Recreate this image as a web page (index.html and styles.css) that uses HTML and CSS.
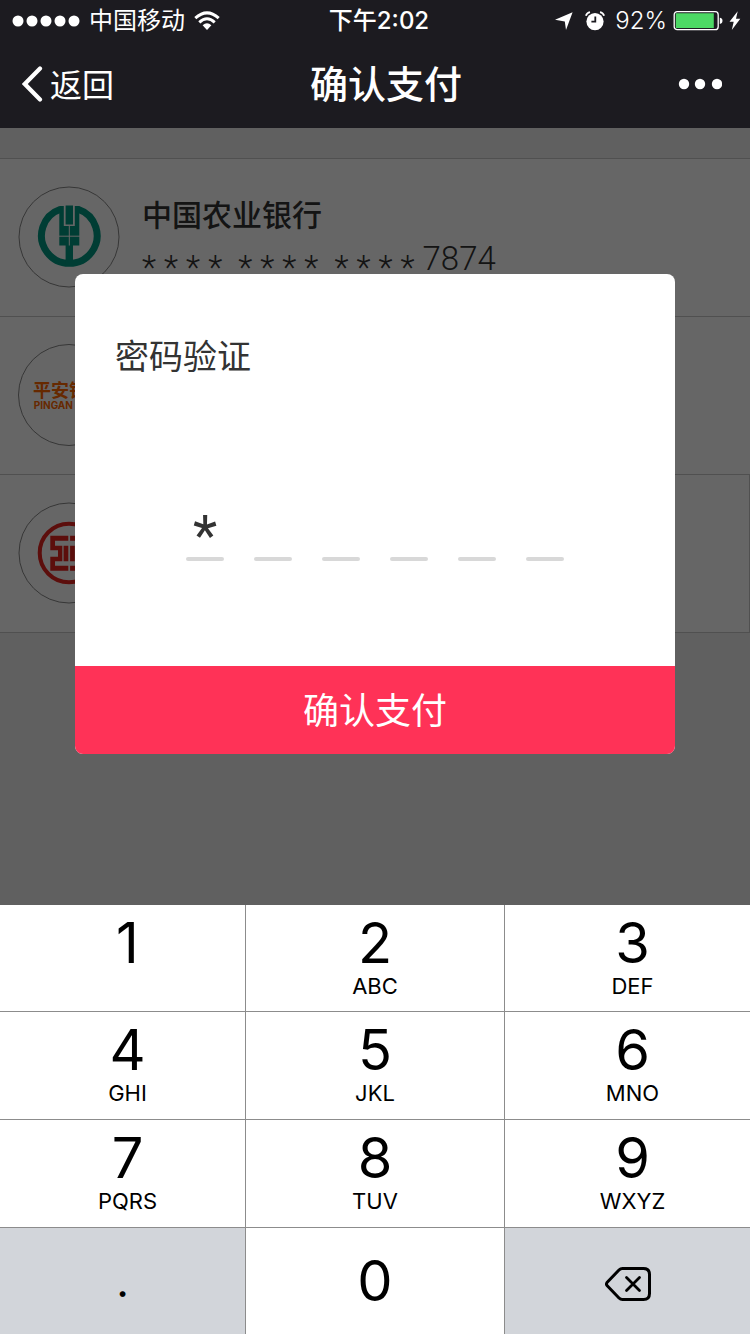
FILE: index.html
```html
<!DOCTYPE html>
<html lang="zh-CN">
<head>
<meta charset="utf-8">
<meta name="viewport" content="width=device-width, initial-scale=1">
<title>确认支付</title>
<link rel="stylesheet" href="styles.css">
</head>
<body>
<div class="screen">
  <header class="header">
    <div class="status">
      <div class="status-left">
        <svg viewBox="0 0 68 12" width="68" height="12" fill="#fff" aria-hidden="true"><circle cx="6" cy="6" r="5.5"/><circle cx="20" cy="6" r="5.5"/><circle cx="34" cy="6" r="5.5"/><circle cx="48" cy="6" r="5.5"/><circle cx="62" cy="6" r="5.5"/></svg>
        <span>中国移动</span>
        <svg viewBox="0 0 26 20" width="26" height="20" aria-hidden="true"><g fill="none" stroke="#fff" stroke-width="3"><path d="M1.300 7.200Q13-3.400 24.700 7.200"/><path d="M5.300 11.300Q13 4.300 20.700 11.300"/></g><path d="M8.600 14.300Q13 10.300 17.400 14.300L13 19z" fill="#fff"/></svg>
      </div>
      <div class="clock">下午2:02</div>
      <div class="status-right">
        <svg viewBox="0 0 18 18" width="18" height="18" aria-hidden="true"><path d="M17.600.3 11 17.900 9.800 9.500 0 7.800z" fill="#fff"/></svg>
        <svg class="alarm" viewBox="0 0 20 20" width="20" height="20" aria-hidden="true"><circle cx="10" cy="10.600" r="8.600" fill="#fff"/><path d="M10.300 5.500v5.200H6.400" fill="none" stroke="#1c1b20" stroke-width="1.800"/><path d="M.9 4.800Q1.800 1.800 5 1.200M19.100 4.800Q18.200 1.800 15 1.200" fill="none" stroke="#fff" stroke-width="1.800"/></svg>
        <span class="percent">92%</span>
        <svg viewBox="0 0 50 20" width="50" height="20" aria-hidden="true"><rect x="1.200" y=".7" width="44" height="18" rx="3" fill="none" stroke="#fff" stroke-width="1.300"/><path d="M2.800 2.300h38v14.800h-38z" fill="#4cd964"/><path d="M46.800 6.700q2.700.3 2.700 3.100t-2.700 3.100z" fill="#fff"/></svg>
        <svg viewBox="0 0 12 20" width="12" height="20" aria-hidden="true"><path d="M8.700.2.5 10.800h4.200L2.800 19 11.300 7.800H7z" fill="#fff"/></svg>
      </div>
    </div>
    <nav class="nav">
      <button class="back" type="button">
        <svg viewBox="0 0 22 36" width="22" height="36" aria-hidden="true"><path d="M18 2.500 2.800 18 18 33.500" fill="none" stroke="#fff" stroke-width="4.200" stroke-linecap="round"/></svg>
        <span>返回</span>
      </button>
      <h1 class="title">确认支付</h1>
      <button class="more" type="button" aria-label="更多">
        <svg viewBox="0 0 44 12" width="44" height="12" fill="#fff" aria-hidden="true"><circle cx="6" cy="6" r="5.200"/><circle cx="22" cy="6" r="5.200"/><circle cx="39" cy="6" r="5.200"/></svg>
      </button>
    </nav>
  </header>

  <main class="content">
    <ul class="cards">
      <li class="card">
        <svg class="logo" viewBox="-1 -1 102 102" width="102" height="102" role="img" aria-label="中国农业银行">
          <circle cx="50" cy="50" r="50" fill="#fff" stroke="#888"/>
          <path d="M41.500 22.200A27.800 27.800 0 1 0 59.100 22.200" fill="none" stroke="#009882" stroke-width="7"/>
          <g fill="#009882">
            <path d="M40.300 19h4.500v20H55.800V19h4.500v39.500H54V77H46.600V58.500H40.300z"/>
            <rect x="46.600" y="18.500" width="7.400" height="19"/>
          </g>
          <path d="M40 49.200h21M50.300 38.500v20" stroke="#fff" stroke-width="1" fill="none"/>
        </svg>
        <div class="info">
          <div class="bank">中国农业银行</div>
          <div class="number"><span class="stars">* * * * &nbsp;* * * * &nbsp;* * * *</span> <span>7874</span></div>
        </div>
      </li>
      <li class="card">
        <div class="logo-pingan" role="img" aria-label="平安银行"><span class="pingan-cn">平安银行</span><span class="pingan-en">PINGAN BANK</span></div>
      </li>
      <li class="card card-last">
        <svg class="logo" viewBox="-1 -1 102 102" width="102" height="102" role="img" aria-label="工商银行">
          <circle cx="50" cy="50" r="50" fill="#fff" stroke="#888"/>
          <circle cx="50" cy="50" r="29.300" fill="none" stroke="#e6231e" stroke-width="4"/>
          <g fill="#e6231e">
            <path d="M31.300 32.700H49.300V37.700H36V42.700H43.300V58.300H36V62.700H49.300V67.700H31.300V53.700H39V47.300H31.300zM44.600 42.700h4.700v15.600h-4.700z"/>
            <path d="M69.100 32.700H51.100V37.700H64.400V42.700H57.100V58.300H64.400V62.700H51.100V67.700H69.100V53.700H61.400V47.300H69.100zM55.800 42.700h-4.700v15.600h4.700z"/>
          </g>
        </svg>
      </li>
    </ul>

    <div class="overlay">
      <form class="dialog" role="dialog" aria-labelledby="dialog-title">
        <div class="dialog-body">
          <h2 class="dialog-title" id="dialog-title">密码验证</h2>
          <div class="slots">
            <label class="slot"><input type="text" inputmode="numeric" maxlength="1" value="*" aria-label="密码第1位"></label>
            <label class="slot"><input type="text" inputmode="numeric" maxlength="1" aria-label="密码第2位"></label>
            <label class="slot"><input type="text" inputmode="numeric" maxlength="1" aria-label="密码第3位"></label>
            <label class="slot"><input type="text" inputmode="numeric" maxlength="1" aria-label="密码第4位"></label>
            <label class="slot"><input type="text" inputmode="numeric" maxlength="1" aria-label="密码第5位"></label>
            <label class="slot"><input type="text" inputmode="numeric" maxlength="1" aria-label="密码第6位"></label>
          </div>
        </div>
        <button class="confirm" type="button">确认支付</button>
      </form>
    </div>
  </main>

  <div class="keypad">
    <button class="key key-side" type="button"><span class="digit">1</span></button>
    <button class="key" type="button"><span class="digit">2</span><span class="letters">ABC</span></button>
    <button class="key key-side" type="button"><span class="digit">3</span><span class="letters">DEF</span></button>
    <button class="key key-side" type="button"><span class="digit">4</span><span class="letters">GHI</span></button>
    <button class="key" type="button"><span class="digit">5</span><span class="letters">JKL</span></button>
    <button class="key key-side" type="button"><span class="digit">6</span><span class="letters">MNO</span></button>
    <button class="key key-side" type="button"><span class="digit">7</span><span class="letters">PQRS</span></button>
    <button class="key" type="button"><span class="digit">8</span><span class="letters">TUV</span></button>
    <button class="key key-side" type="button"><span class="digit">9</span><span class="letters">WXYZ</span></button>
    <button class="key key-gray key-dot" type="button">.</button>
    <button class="key key-zero" type="button"><span class="digit">0</span></button>
    <button class="key key-gray key-delete" type="button" aria-label="删除">
      <svg viewBox="0 0 46 34" width="46" height="34" fill="none" stroke="#000" stroke-width="3" stroke-linecap="round" stroke-linejoin="round" aria-hidden="true"><path d="M17.500 1.500H38.500Q44.500 1.500 44.500 7.500V26.500Q44.500 32.500 38.500 32.500H17.500Q15.500 32.500 14 31L2 18.500Q1 17 2 15.500L14 3Q15.500 1.500 17.500 1.500z"/><path d="M21.500 10.500l13 13M34.500 10.500l-13 13" stroke-width="2.800"/></svg>
    </button>
  </div>
</div>
</body>
</html>
```

FILE: styles.css
```css
* {
  box-sizing: border-box;
}

body {
  margin: 0;
  font-family: Inter, "Noto Sans CJK SC", sans-serif;
  color: #333;
}

button {
  margin: 0;
  padding: 0;
  border: 0;
  background: none;
  font-family: inherit;
  color: inherit;
}

svg {
  display: block;
  flex: none;
}

.screen {
  display: flex;
  flex-direction: column;
  min-height: 100vh;
}

/* Header */
.header {
  background: #1c1b20;
  color: #fff;
}

.status {
  display: grid;
  grid-template-columns: 1fr auto 1fr;
  align-items: center;
  height: 40px;
  padding: 1px 4px 0 12px;
  font-size: 24px;
  line-height: 40px;
}

.status-left,
.status-right {
  display: flex;
  align-items: center;
  gap: 9px;
}

.status-right {
  justify-content: flex-end;
  gap: 6px;
  padding-right: 5px;
}

.alarm {
  margin: 0 4px 0 6px;
}

.percent {
  font-weight: 300;
}

.clock {
  font-weight: 500;
}

.nav {
  display: grid;
  grid-template-columns: 1fr auto 1fr;
  align-items: center;
  height: 88px;
  padding-left: 22px;
}

.back {
  display: flex;
  align-items: center;
  justify-self: start;
  gap: 6px;
  font-size: 32px;
  line-height: 40px;
}

.back span {
  padding-top: 3px;
}

.title {
  margin: 0;
  font-size: 38px;
  font-weight: 500;
  line-height: 88px;
}

.more {
  justify-self: end;
  padding: 20px 28px;
}

/* Bank card list */
.content {
  position: relative;
  flex: 1;
  padding-top: 30px;
  background: #f0f0f0;
}

.cards {
  margin: 0;
  padding: 0;
  list-style: none;
  border-top: 1px solid #c8c8c8;
  background: #fff;
}

.card {
  display: flex;
  align-items: center;
  gap: 22px;
  height: 158px;
  padding: 0 0 2px 18px;
  border-bottom: 1px solid #c8c8c8;
}

.card-last {
  border-right: 1px solid #c8c8c8;
}

.logo-pingan {
  display: flex;
  flex-direction: column;
  align-items: center;
  justify-content: center;
  width: 102px;
  height: 102px;
  padding-top: 4px;
  border: 1px solid #888;
  border-radius: 50%;
  color: #f60;
  font-weight: 700;
}

.pingan-cn {
  font-size: 18px;
  line-height: 16px;
}

.pingan-en {
  font-size: 10px;
  line-height: 12px;
  white-space: nowrap;
}

.bank {
  font-size: 30px;
  font-weight: 500;
  line-height: 44px;
}

.number {
  display: flex;
  gap: 8px;
  height: 44px;
  font-family: Roboto, "Noto Sans CJK SC", sans-serif;
  font-size: 33px;
  font-weight: 300;
  line-height: 44px;
}

.stars {
  padding-top: 9px;
}

/* Password dialog */
.overlay {
  position: absolute;
  inset: 0;
  padding: 146px 10% 0;
  background: rgba(0, 0, 0, 0.6);
}

.dialog {
  overflow: hidden;
  border-radius: 8px;
  background: #fff;
}

.dialog-body {
  height: 392px;
  padding: 58px 40px 0;
}

.dialog-title {
  margin: 0;
  font-size: 34px;
  font-weight: 400;
  line-height: 50px;
}

.slots {
  display: flex;
  justify-content: center;
  gap: 30px;
  padding-top: 126px;
}

.slot {
  width: 38px;
}

.slot input {
  display: block;
  width: 100%;
  height: 56px;
  padding: 0;
  border: 0;
  outline: 0;
  background: none;
  font-family: Roboto, "Noto Sans CJK SC", sans-serif;
  font-size: 56px;
  font-weight: 400;
  line-height: 56px;
  text-align: center;
  color: #333;
}

.slot::after {
  content: "";
  display: block;
  height: 4px;
  margin-top: -7px;
  border-radius: 2px;
  background: #d8d8d8;
}

.confirm {
  display: block;
  width: 100%;
  height: 88px;
  padding-bottom: 4px;
  background: #ff3257;
  color: #fff;
  font-size: 36px;
}

/* Numeric keypad */
.keypad {
  display: grid;
  grid-template-columns: 245fr 258fr 245fr;
  grid-template-rows: 106px 107px 107px 106px;
  gap: 1px;
  background: #8c8c8c;
}

.key {
  display: flex;
  flex-direction: column;
  align-items: center;
  padding-top: 10px;
  background: #fff;
  color: #000;
}

.key-side {
  padding-left: 10px;
}

.digit {
  font-size: 56px;
  line-height: 56px;
}

.letters {
  font-size: 22px;
  line-height: 30px;
}

.key-zero,
.key-gray {
  justify-content: center;
  padding-top: 0;
}

.key-gray {
  background: #d2d5da;
}

.key-dot {
  font-size: 44px;
  line-height: 44px;
}

.key-delete {
  padding-top: 6px;
}
```
